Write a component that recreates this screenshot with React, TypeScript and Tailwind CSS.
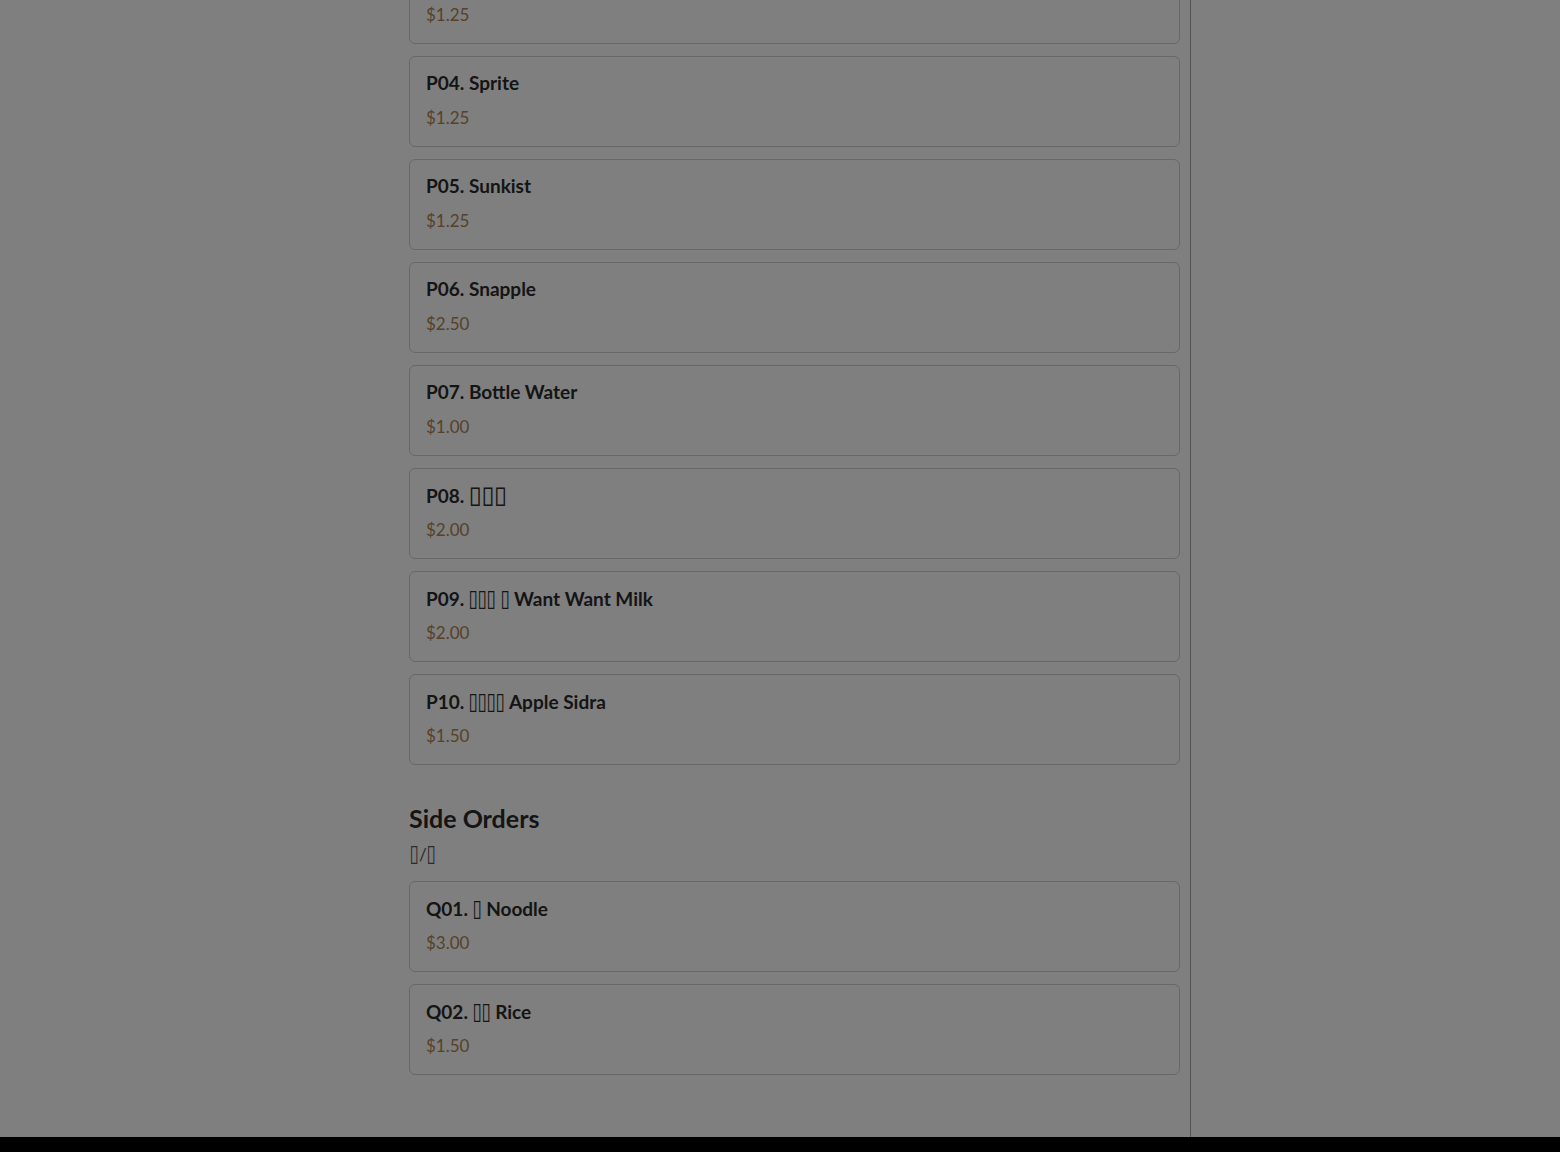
import React from "react";

type Item = { code: string; name: React.ReactNode; price: string };

// missing-glyph boxes, as the page shows them
function Tofu({ n, w = 9, wide = false, lh = "leading-[20px]" }: { n: number; w?: number; wide?: boolean; lh?: string }) {
  return (
    <>
      {Array.from({ length: n }).map((_, i) => (
        <span
          key={i}
          className={`inline-flex justify-center font-['DejaVu_Sans'] font-normal ${lh}`}
          style={{ width: w }}
        >
          <span className={wide ? "text-[24px]" : "text-[23px] scale-x-75"}>{"\u25AF"}</span>
        </span>
      ))}
    </>
  );
}

const drinks: Item[] = [
  { code: "P04", name: "Sprite", price: "$1.25" },
  { code: "P05", name: "Sunkist", price: "$1.25" },
  { code: "P06", name: "Snapple", price: "$2.50" },
  { code: "P07", name: "Bottle Water", price: "$1.00" },
  { code: "P08", name: <Tofu n={3} w={12.7} wide />, price: "$2.00" },
  {
    code: "P09",
    name: (
      <>
        <Tofu n={3} /> <Tofu n={1} /> Want Want Milk
      </>
    ),
    price: "$2.00",
  },
  {
    code: "P10",
    name: (
      <>
        <Tofu n={4} /> Apple Sidra
      </>
    ),
    price: "$1.50",
  },
];

const sides: Item[] = [
  {
    code: "Q01",
    name: (
      <>
        <Tofu n={1} /> Noodle
      </>
    ),
    price: "$3.00",
  },
  {
    code: "Q02",
    name: (
      <>
        <Tofu n={2} /> Rice
      </>
    ),
    price: "$1.50",
  },
];

function MenuCard({ item }: { item: Item }) {
  return (
    <div className="border border-[#cfcfcf] rounded-md px-4 pt-4 pb-[17px] bg-white">
      <div className="h-5 leading-[20px] text-[19px] font-bold text-[#2a2a2a] whitespace-nowrap">
        {item.code}. {item.name}
      </div>
      <div className="mt-3 text-[17px] leading-6 text-[#ac8450] translate-y-px">{item.price}</div>
    </div>
  );
}

export default function App() {
  return (
    <div className="h-screen overflow-hidden bg-white font-['Lato',sans-serif] flex">
      <div className="w-[409px] shrink-0" />

      <main className="w-[782px] shrink-0 pr-[10px] border-r border-[#a8a8a8]">
        <div className="-mt-[47px] flex flex-col gap-3">
          <MenuCard item={{ code: "P03", name: "7 Up", price: "$1.25" }} />
          {drinks.map((d) => (
            <MenuCard key={d.code} item={d} />
          ))}
        </div>

        <section className="mt-[38px]">
          <h2 className="text-[25px] leading-8 font-bold text-[#2a2a2a] -translate-y-px">Side Orders</h2>
          <p className="mt-1.5 h-6 leading-6 text-[17px] text-[#555]">
            <Tofu n={1} w={10} lh="leading-6" />/<Tofu n={1} w={10} lh="leading-6" />
          </p>
          <div className="mt-4 flex flex-col gap-3">
            {sides.map((s) => (
              <MenuCard key={s.code} item={s} />
            ))}
          </div>
        </section>
      </main>

      <aside className="flex-1" />

      {/* dim overlay */}
      <div className="fixed inset-0 bg-black/50" />
      <div className="fixed bottom-0 inset-x-0 h-[15px] bg-black" />
    </div>
  );
}
